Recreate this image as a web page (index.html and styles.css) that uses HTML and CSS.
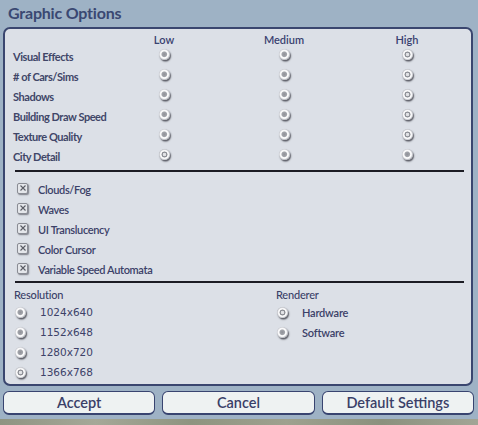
FILE: index.html
```html
<!DOCTYPE html>
<html>
<head>
<meta charset="utf-8">
<link rel="stylesheet" href="styles.css">
</head>
<body>
<div class="title">Graphic Options</div>
<div class="panel">
  <div class="grid">
    <div></div><div class="head">Low</div><div class="head">Medium</div><div class="head">High</div>

    <div class="lbl">Visual Effects</div><div class="cell"><span class="radio"></span></div><div class="cell"><span class="radio"></span></div><div class="cell"><span class="radio on"></span></div>
    <div class="lbl"># of Cars/Sims</div><div class="cell"><span class="radio"></span></div><div class="cell"><span class="radio"></span></div><div class="cell"><span class="radio on"></span></div>
    <div class="lbl">Shadows</div><div class="cell"><span class="radio"></span></div><div class="cell"><span class="radio"></span></div><div class="cell"><span class="radio on"></span></div>
    <div class="lbl">Building Draw Speed</div><div class="cell"><span class="radio"></span></div><div class="cell"><span class="radio"></span></div><div class="cell"><span class="radio on"></span></div>
    <div class="lbl">Texture Quality</div><div class="cell"><span class="radio"></span></div><div class="cell"><span class="radio"></span></div><div class="cell"><span class="radio on"></span></div>
    <div class="lbl">City Detail</div><div class="cell"><span class="radio on"></span></div><div class="cell"><span class="radio"></span></div><div class="cell"><span class="radio"></span></div>
  </div>
  <div class="sep sep1"></div>
  <div class="checks">
    <div class="chk"><span class="box"><svg viewBox="0 0 6 6" width="6" height="6"><path d="M0.5 0.5L5.5 5.5M5.5 0.5L0.5 5.5" stroke="#5a5c64" stroke-width="1.1"/></svg></span><span>Clouds/Fog</span></div>
    <div class="chk"><span class="box"><svg viewBox="0 0 6 6" width="6" height="6"><path d="M0.5 0.5L5.5 5.5M5.5 0.5L0.5 5.5" stroke="#5a5c64" stroke-width="1.1"/></svg></span><span>Waves</span></div>
    <div class="chk"><span class="box"><svg viewBox="0 0 6 6" width="6" height="6"><path d="M0.5 0.5L5.5 5.5M5.5 0.5L0.5 5.5" stroke="#5a5c64" stroke-width="1.1"/></svg></span><span>UI Translucency</span></div>
    <div class="chk"><span class="box"><svg viewBox="0 0 6 6" width="6" height="6"><path d="M0.5 0.5L5.5 5.5M5.5 0.5L0.5 5.5" stroke="#5a5c64" stroke-width="1.1"/></svg></span><span>Color Cursor</span></div>
    <div class="chk"><span class="box"><svg viewBox="0 0 6 6" width="6" height="6"><path d="M0.5 0.5L5.5 5.5M5.5 0.5L0.5 5.5" stroke="#5a5c64" stroke-width="1.1"/></svg></span><span>Variable Speed Automata</span></div>
  </div>
  <div class="sep sep2"></div>
  <div class="bottom">
    <div class="col res">
      <div class="sub">Resolution</div>
      <div class="opt"><span class="radio"></span><span class="num">1024x640</span></div>
      <div class="opt"><span class="radio"></span><span class="num">1152x648</span></div>
      <div class="opt"><span class="radio"></span><span class="num">1280x720</span></div>
      <div class="opt"><span class="radio on"></span><span class="num">1366x768</span></div>
    </div>
    <div class="col rend">
      <div class="sub">Renderer</div>
      <div class="opt"><span class="radio on"></span><span class="word">Hardware</span></div>
      <div class="opt"><span class="radio"></span><span class="word">Software</span></div>
    </div>
  </div>
</div>
<div class="buttons">
  <div class="btn">Accept</div>
  <div class="btn">Cancel</div>
  <div class="btn">Default Settings</div>
</div>
<div class="ground"></div>
</body>
</html>
```
FILE: styles.css
```css
html, body {
  margin: 0;
  padding: 0;
}
body {
  width: 478px;
  height: 425px;
  overflow: hidden;
  background: #9eb2c5;
  font-family: Lato, "Open Sans", sans-serif;
  color: #3b4168;
}
.title {
  height: 27px;
  box-sizing: border-box;
  padding: 3px 0 0 8px;
  font-size: 16px;
  font-weight: 700;
  letter-spacing: -0.2px;
  color: #3a4872;
  line-height: 20px;
}
.panel {
  margin: 0 5px 0 3px;
  height: 359px;
  box-sizing: border-box;
  border: 2px solid #3a466f;
  border-radius: 7px;
  background: #dce0e7;
  padding-top: 4px;
}
.grid {
  display: grid;
  grid-template-columns: 91px 120px 120px 126px;
  grid-auto-rows: 20px;
  grid-template-rows: 14px;
  padding-left: 8px;
}
.head {
  font-size: 11px;
  font-weight: 600;
  text-align: center;
  line-height: 14px;
  color: #3a4270;
}
.lbl {
  font-size: 11px;
  font-weight: 700;
  letter-spacing: -0.45px;
  white-space: nowrap;
  line-height: 20px;
  color: #404668;
}
.cell {
  display: flex;
  justify-content: center;
  align-items: flex-start;
  padding-top: 2px;
}
.radio {
  display: inline-block;
  width: 11px;
  height: 11px;
  border-radius: 50%;
  flex: none;
  background: radial-gradient(circle at 48% 48%, #8f9198 0, #a3a5ab 2.4px, #d8d9dc 2.9px, #ffffff 3.4px, #f4f4f6 4.3px, #b3b5bb 5.5px);
  box-shadow: 1px 1.5px 1.5px rgba(30, 30, 40, 0.7);
}
.radio.on {
  background: radial-gradient(circle at 50% 50%, #e6e7ea 0, #dcdde0 1.5px, #8a8c93 2.1px, #8a8c93 2.7px, #ffffff 3.3px, #f4f4f6 4.3px, #b3b5bb 5.5px);
}
.sep {
  height: 2px;
  background: #1c1c24;
  margin-left: 10px;
  margin-right: 7px;
}
.sep1 {
  margin-top: 3px;
}
.checks {
  padding: 7px 0 0 12px;
}
.chk {
  height: 20px;
  display: flex;
  align-items: center;
  gap: 10px;
  font-size: 11px;
  font-weight: 600;
  letter-spacing: -0.35px;
}
.box {
  width: 9px;
  height: 9px;
  border: 1px solid #8a8c94;
  border-radius: 2px;
  background: #e4e6ea;
  display: flex;
  align-items: center;
  justify-content: center;
  box-shadow: 1px 1px 1.5px rgba(30, 30, 40, 0.5);
  margin-top: -2px;
}
.box svg {
  display: block;
}
.sep2 {
  margin-top: 2px;
}
.bottom {
  display: flex;
  padding-top: 5px;
}
.col.res {
  width: 262px;
  padding-left: 9px;
}
.sub {
  font-size: 11px;
  line-height: 14px;
  font-weight: 500;
  letter-spacing: -0.2px;
  color: #3a4068;
}
.opt {
  height: 20px;
  display: flex;
  align-items: center;
}
.res .opt {
  padding-left: 1px;
  gap: 14px;
}
.rend .opt {
  padding-left: 1px;
  gap: 14px;
}
.num {
  font-family: "DejaVu Sans", Verdana, sans-serif;
  font-size: 10.5px;
  color: #3d4268;
}
.word {
  font-size: 11px;
  font-weight: 600;
  letter-spacing: -0.2px;
}
.buttons {
  display: flex;
  gap: 7px;
  padding: 5px 4px 0 3px;
}
.btn {
  flex: 1;
  height: 24px;
  box-sizing: border-box;
  border: 1.5px solid #384470;
  border-bottom-width: 2px;
  border-radius: 6px;
  background: #eef2f2;
  text-align: center;
  font-size: 14.5px;
  font-weight: 600;
  line-height: 21px;
  color: #3a3f68;
}
.ground {
  margin-top: 4px;
  height: 10px;
  background: linear-gradient(90deg, #8f9482 0%, #a5a898 20%, #8e9480 40%, #9ea18f 60%, #8b917e 80%, #a2a596 100%);
}
```
